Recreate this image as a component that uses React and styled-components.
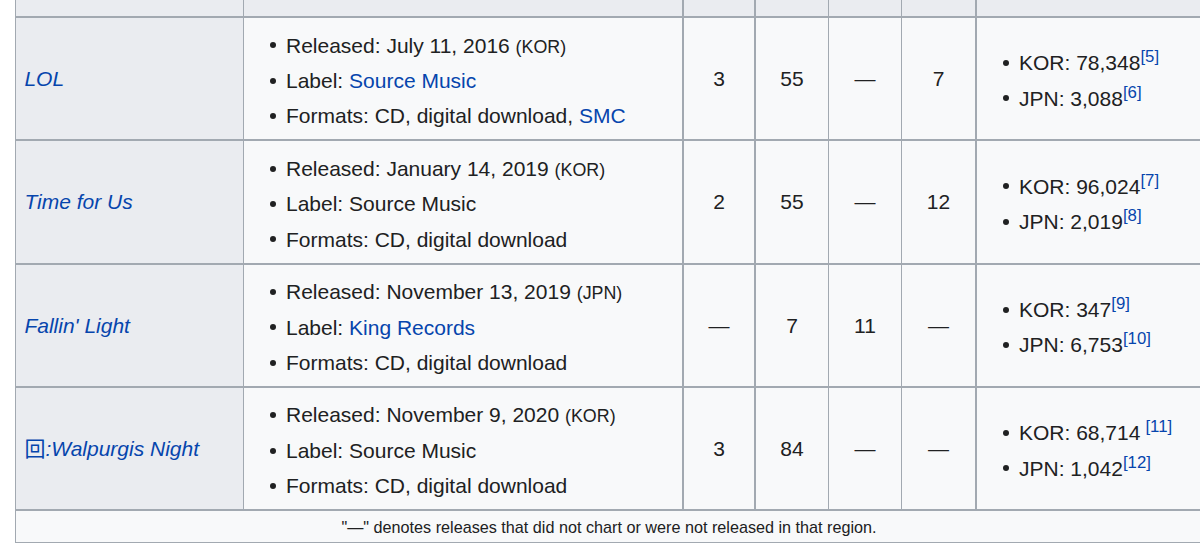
import React from "react";
import styled, { createGlobalStyle } from "styled-components";

const GlobalStyle = createGlobalStyle`
  * {
    box-sizing: border-box;
  }
  body {
    margin: 0;
    background: #ffffff;
    overflow: hidden;
  }
`;

const Table = styled.table`
  border-collapse: separate;
  border-spacing: 0;
  table-layout: fixed;
  width: 1188px;
  margin-left: 15px;
  font-family: "Liberation Sans", Arial, sans-serif;
  font-size: 21px;
  line-height: 33.4px;
  color: #202122;
`;

/* header row is cut off by the top of the screenshot, only its bottom shows */
const HeadCell = styled.th`
  width: ${(props) => props.w}px;
  height: 18px;
  padding: 0;
  background: #eaecf0;
  border-right: ${(props) => props.br}px solid #a2a9b1;
  border-left: ${(props) => (props.first ? "1px solid #a2a9b1" : "none")};
  border-bottom: 2px solid #a2a9b1;
`;

const RowHead = styled.th`
  height: 123.3px;
  padding: 4px 8.4px;
  background: #eaecf0;
  text-align: left;
  font-weight: normal;
  vertical-align: middle;
  border-left: 1px solid #a2a9b1;
  border-right: 1px solid #a2a9b1;
  border-bottom: 2px solid #a2a9b1;
`;

const Cell = styled.td`
  padding: 4px 8.4px;
  background: #f8f9fa;
  text-align: ${(props) => (props.center ? "center" : "left")};
  vertical-align: middle;
  border-right: ${(props) => props.br}px solid #a2a9b1;
  border-bottom: 2px solid #a2a9b1;
`;

const FootCell = styled.td`
  height: 32px;
  padding: 0 8.4px;
  background: #f8f9fa;
  text-align: center;
  font-size: 16.2px;
  line-height: 22px;
  border-left: 1px solid #a2a9b1;
  border-right: 1px solid #a2a9b1;
  border-bottom: 1px solid #a2a9b1;
`;

const List = styled.ul`
  margin: 6px 0 0 33.6px;
  padding: 0;
  list-style: none;
`;

const Item = styled.li`
  margin-bottom: 2px;
  &::before {
    content: "";
    display: inline-block;
    width: 6px;
    height: 6px;
    margin-left: -16px;
    margin-right: 10px;
    border-radius: 50%;
    background: #202122;
    vertical-align: 0.2em;
  }
`;

const Link = styled.a`
  color: #0645ad;
  text-decoration: none;
  font-style: ${(props) => (props.italic ? "italic" : "normal")};
`;

const Hanja = styled.span`
  font-family: "Noto Sans CJK KR", "Noto Sans CJK JP", sans-serif;
  font-style: normal;
  line-height: 1;
`;

const Small = styled.span`
  font-size: 85%;
  line-height: 1;
`;

const Ref = styled.sup`
  font-size: 80%;
  line-height: 0;
  vertical-align: super;
  margin-left: ${(props) => (props.spaced ? "5px" : "0")};
  a {
    color: #0645ad;
    text-decoration: none;
  }
`;

const columns = [
  { w: 229, br: 1 },
  { w: 440, br: 2 },
  { w: 72, br: 2 },
  { w: 73, br: 1 },
  { w: 73, br: 1 },
  { w: 75, br: 2 },
  { w: 226, br: 1 },
];

const releases = [
  {
    title: <Link italic href="#">LOL</Link>,
    date: "July 11, 2016",
    region: "KOR",
    label: <Link href="#">Source Music</Link>,
    formats: (
      <>
        CD, digital download, <Link href="#">SMC</Link>
      </>
    ),
    peaks: ["3", "55", "—", "7"],
    sales: [
      { region: "KOR", value: "78,348", ref: "5" },
      { region: "JPN", value: "3,088", ref: "6" },
    ],
  },
  {
    title: <Link italic href="#">Time for Us</Link>,
    date: "January 14, 2019",
    region: "KOR",
    label: "Source Music",
    formats: "CD, digital download",
    peaks: ["2", "55", "—", "12"],
    sales: [
      { region: "KOR", value: "96,024", ref: "7" },
      { region: "JPN", value: "2,019", ref: "8" },
    ],
  },
  {
    title: <Link italic href="#">Fallin' Light</Link>,
    date: "November 13, 2019",
    region: "JPN",
    label: <Link href="#">King Records</Link>,
    formats: "CD, digital download",
    peaks: ["—", "7", "11", "—"],
    sales: [
      { region: "KOR", value: "347", ref: "9" },
      { region: "JPN", value: "6,753", ref: "10" },
    ],
  },
  {
    title: (
      <Link italic href="#">
        <Hanja>回</Hanja>:Walpurgis Night
      </Link>
    ),
    date: "November 9, 2020",
    region: "KOR",
    label: "Source Music",
    formats: "CD, digital download",
    peaks: ["3", "84", "—", "—"],
    sales: [
      { region: "KOR", value: "68,714", ref: "11", spaced: true },
      { region: "JPN", value: "1,042", ref: "12" },
    ],
  },
];

const App = () => (
  <>
    <GlobalStyle />
    <Table>
      <thead>
        <tr>
          {columns.map((c, i) => (
            <HeadCell key={i} w={c.w} br={c.br} first={i === 0} />
          ))}
        </tr>
      </thead>
      <tbody>
        {releases.map((r, i) => (
          <tr key={i}>
            <RowHead scope="row">{r.title}</RowHead>
            <Cell br={2}>
              <List>
                <Item>
                  Released: {r.date} <Small>({r.region})</Small>
                </Item>
                <Item>Label: {r.label}</Item>
                <Item>Formats: {r.formats}</Item>
              </List>
            </Cell>
            {r.peaks.map((p, j) => (
              <Cell key={j} center br={columns[j + 2].br}>
                {p}
              </Cell>
            ))}
            <Cell br={1}>
              <List>
                {r.sales.map((s) => (
                  <Item key={s.region}>
                    {s.region}: {s.value}
                    <Ref spaced={s.spaced}>
                      <a href="#">[{s.ref}]</a>
                    </Ref>
                  </Item>
                ))}
              </List>
            </Cell>
          </tr>
        ))}
        <tr>
          <FootCell colSpan={7}>
            "—" denotes releases that did not chart or were not released in that region.
          </FootCell>
        </tr>
      </tbody>
    </Table>
  </>
);

export default App;
